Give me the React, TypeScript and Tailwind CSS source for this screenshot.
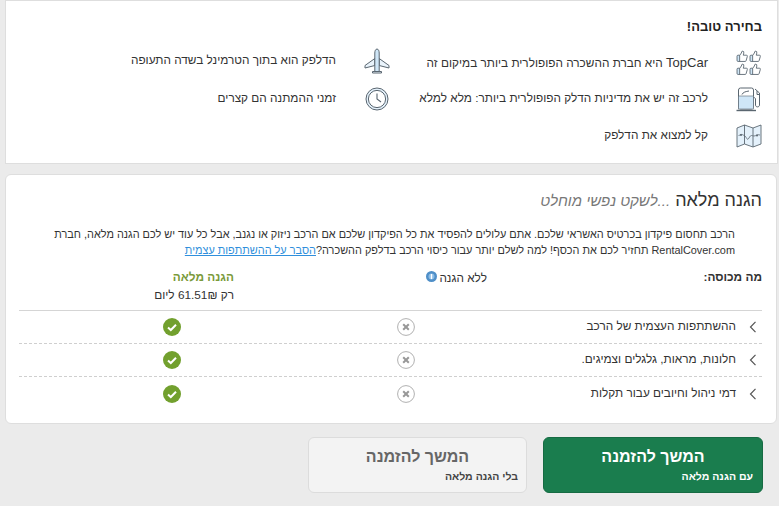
import React from "react"

const stroke = "#5a6670"
const fill = "#cfe6f7"

function Thumb({ x, y }: { x: number; y: number }) {
  return (
    <g transform={`translate(${x} ${y}) scale(0.52)`} stroke={stroke} strokeWidth="1.7" fill="none" strokeLinejoin="round">
      <rect x="2" y="10" width="5" height="12" fill={fill} stroke="none" />
      <path d="M7 10v12" />
      <path d="M15 5.88 14 10h5.83a2 2 0 0 1 1.92 2.56l-2.33 8A2 2 0 0 1 17.5 22H4a2 2 0 0 1-2-2v-8a2 2 0 0 1 2-2h2.76a2 2 0 0 0 1.79-1.11L12 2a3.13 3.13 0 0 1 3 3.88Z" />
    </g>
  )
}

function ThumbsIcon() {
  return (
    <svg width="26" height="26" viewBox="0 0 26 26">
      <Thumb x={0} y={0} />
      <Thumb x={13} y={0} />
      <Thumb x={0} y={13} />
      <Thumb x={13} y={13} />
    </svg>
  )
}

function PumpIcon() {
  return (
    <svg width="26" height="26" viewBox="0 0 26 26" fill="none" stroke={stroke} strokeWidth="1">
      <rect x="2.5" y="2" width="15" height="21" rx="2" />
      <rect x="2.5" y="10" width="15" height="13" fill={fill} strokeWidth="0.6" />
      <path d="M6 8.5 C7 6 10 5.5 13 5" />
      <path d="M0.5 24.5 H20" strokeWidth="1.4" />
      <path d="M19 3 L23.5 7 V19 C23.5 21.5 19.5 21.5 19.5 19 V13 C19.5 12 18.5 11.5 17.5 11.5" />
      <path d="M21 5 V8.5 H23.5" />
    </svg>
  )
}

function MapIcon() {
  return (
    <svg width="26" height="26" viewBox="0 0 26 26" fill="none" stroke={stroke} strokeWidth="0.9">
      <path d="M1 5 L8.5 2 L17 5 L25 2 V21 L17 24 L8.5 21 L1 24 Z" fill="#e4f1fb" />
      <path d="M8.5 2 V21 M17 5 V24" />
      <path d="M2.5 13 C5 10 7 12 9 13 C11 15 11 18 13 15 C15 11 16 13 18 13 C20 13 21 11 24 12" strokeWidth="0.8" />
      <circle cx="5" cy="12" r="1" fill={stroke} stroke="none" />
      <circle cx="21" cy="12.5" r="1" fill={stroke} stroke="none" />
    </svg>
  )
}

function PlaneIcon() {
  return (
    <svg width="26" height="26" viewBox="0 0 26 26" stroke={stroke} strokeWidth="1" fill="#e9f3fb">
      <path d="M10.8 10.5 L1 17.5 V20 L10.8 17.5 Z" />
      <path d="M15.2 10.5 L25 17.5 V20 L15.2 17.5 Z" />
      <path d="M8.5 25 V23.5 H17.5 V25 Z" />
      <path d="M13 1 C14.4 1 15.2 3 15.2 5 V23.5 H10.8 V5 C10.8 3 11.6 1 13 1 Z" fill={fill} />
    </svg>
  )
}

function ClockIcon() {
  return (
    <svg width="24" height="24" viewBox="0 0 24 24" fill="none" stroke={stroke}>
      <circle cx="12" cy="12" r="11" fill="#e4f1fb" strokeWidth="1" />
      <circle cx="12" cy="12" r="8.6" fill="#fff" strokeWidth="1" />
      <path d="M12 6.5 V12 L16 15" strokeWidth="1.1" />
    </svg>
  )
}

function Chevron() {
  return (
    <svg width="8" height="12" viewBox="0 0 8 12" fill="none" stroke="#555" strokeWidth="1.2">
      <path d="M6.5 0.8 L1.5 6 L6.5 11.2" />
    </svg>
  )
}

function CrossMark() {
  return (
    <svg width="18" height="18" viewBox="0 0 18 18" fill="none">
      <circle cx="9" cy="9" r="8.4" fill="#fff" stroke="#b0b0b0" strokeWidth="1" />
      <path d="M6.2 6.2 L11.8 11.8 M11.8 6.2 L6.2 11.8" stroke="#989898" strokeWidth="2" />
    </svg>
  )
}

function CheckMark() {
  return (
    <svg width="18" height="18" viewBox="0 0 18 18" fill="none">
      <circle cx="9" cy="9" r="9" fill="#72a02e" />
      <path d="M5 9.5 L7.8 12 L13 6.8" stroke="#fff" strokeWidth="2" />
    </svg>
  )
}

function InfoDot() {
  return (
    <svg width="11" height="11" viewBox="0 0 11 11">
      <circle cx="5.5" cy="5.5" r="5.5" fill="#4f8fc8" />
      <circle cx="5.5" cy="5.5" r="3" fill="#8cbde6" />
      <path d="M5.5 3 V8" stroke="#fff" strokeWidth="1.4" />
    </svg>
  )
}

const benefits = [
  {
    icon: <ThumbsIcon />,
    text: (
      <>
        <span className="text-[13px]">TopCar</span> היא חברת ההשכרה הפופולרית ביותר במיקום זה
      </>
    ),
    cls: "pt-[2px]",
  },
  { icon: <PlaneIcon />, text: "הדלפק הוא בתוך הטרמינל בשדה התעופה", cls: "pb-[2px]" },
  { icon: <PumpIcon />, text: "לרכב זה יש את מדיניות הדלק הפופולרית ביותר: מלא למלא", cls: "" },
  { icon: <ClockIcon />, text: "זמני ההמתנה הם קצרים", cls: "" },
  { icon: <MapIcon />, text: "קל למצוא את הדלפק", cls: "" },
]

const rows = ["ההשתתפות העצמית של הרכב", "חלונות, מראות, גלגלים וצמיגים.", "דמי ניהול וחיובים עבור תקלות"]

export default function App() {
  return (
    <div
      dir="rtl"
      className="w-[779px] h-[506px] overflow-hidden bg-[#ebebeb] text-[#333] text-[11.8px] font-['Liberation_Sans',Arial,sans-serif]"
    >
      <div className="ml-[5px] mr-[1px] h-[164px] bg-white border border-[#dedede] pt-[17px] pr-[15px]">
        <h3 className="text-[13px] leading-[18px] font-bold text-[#222]">בחירה טובה!</h3>
        <div className="grid grid-cols-[372px_372px] mt-[7px]">
          {benefits.map((b, i) => (
            <div key={i} className={`flex items-center h-[37px] ${b.cls}`}>
              <div className="w-[26px] flex justify-center shrink-0">{b.icon}</div>
              <span className="mr-[28px] mt-[1px]">{b.text}</span>
            </div>
          ))}
        </div>
      </div>

      <div className="ml-[5px] mr-[2px] mt-[10px] h-[250px] bg-white rounded-[6px] border border-[#dedede] pt-[12px] pr-[14px] pl-[13px]">
        <h2 className="text-[18px] leading-[26px] text-[#333]">
          הגנה מלאה <em className="text-[15px] text-[#777]">...לשקט נפשי מוחלט</em>
        </h2>
        <p className="mt-[12px] pr-[27px] pl-[28px] leading-[16px] text-[10.9px]">
          הרכב תחסום פיקדון בכרטיס האשראי שלכם. אתם עלולים להפסיד את כל הפיקדון שלכם אם הרכב ניזוק או נגנב, אבל כל עוד יש לכם הגנה מלאה, חברת RentalCover.com תחזיר לכם את הכסף! למה לשלם יותר עבור כיסוי הרכב בדלפק ההשכרה?
          <a className="text-[#2f8fdc] underline">הסבר על ההשתתפות עצמית</a>
        </p>

        <div className="grid grid-cols-[239px_234px_234px_36px] mt-[8px] h-[45px] border-b border-[#d5d5d5]">
          <div className="font-bold pt-[3px]">מה מכוסה:</div>
          <div className="flex items-start gap-[2px] pr-[36px] pt-[4px]">
            <span>ללא הגנה</span>
            <span className="mt-[1px]">
              <InfoDot />
            </span>
          </div>
          <div className="pr-[55px] pt-[2px] leading-[18px]">
            <div className="font-bold text-[#7a9a3a]">הגנה מלאה</div>
            <div>רק 61.51₪ ליום</div>
          </div>
          <div />
        </div>

        {rows.map((r, i) => (
          <div
            key={r}
            className={`grid grid-cols-[239px_234px_234px_36px] h-[33px] items-center ${
              i < rows.length - 1 ? "border-b border-dashed border-[#cfcfcf]" : ""
            }`}
          >
            <div className="flex items-center gap-[13px] pr-[5px]">
              <Chevron />
              <span>{r}</span>
            </div>
            <div className="flex justify-center">
              <CrossMark />
            </div>
            <div className="flex justify-center">
              <CheckMark />
            </div>
            <div />
          </div>
        ))}
      </div>

      <div className="flex gap-[16px] pr-[16px] mt-[13px]">
        <button className="w-[220px] h-[56px] rounded-[6px] bg-[#1a7d4e] border border-[#166b43] text-white flex flex-col">
          <span className="w-full text-center text-[16px] font-bold leading-[20px] mt-[9px]">המשך להזמנה</span>
          <span className="w-full text-right pr-[9px] text-[10.5px] font-bold leading-[14px] mt-[2px]">עם הגנה מלאה</span>
        </button>
        <button className="w-[219px] h-[56px] rounded-[6px] bg-[#f3f3f3] border border-[#dcdcdc] flex flex-col">
          <span className="w-full text-center text-[16px] font-bold leading-[20px] mt-[9px] text-[#666]">המשך להזמנה</span>
          <span className="w-full text-right pr-[8px] text-[10.5px] font-bold leading-[14px] mt-[2px] text-[#444]">בלי הגנה מלאה</span>
        </button>
      </div>
    </div>
  )
}
